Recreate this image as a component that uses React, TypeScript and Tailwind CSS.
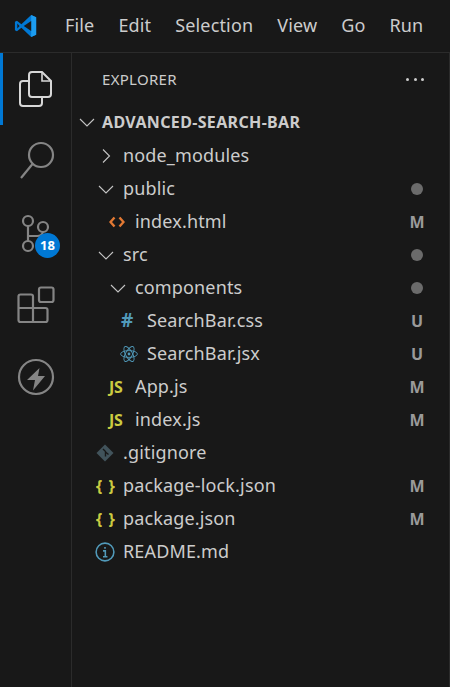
import React from "react";

const stroke = "#858585";

function Chevron({ open }: { open: boolean }) {
  return (
    <svg className="shrink-0" width="16" height="16" viewBox="0 0 16 16" fill="none" stroke="#c5c5c5" strokeWidth="1.1">
      {open ? <path d="M1 5l7 7 7-7" /> : <path d="M5 1.5l6.5 6.5L5 14.5" />}
    </svg>
  );
}

function VsLogo() {
  return (
    <svg className="shrink-0" width="24" height="24" viewBox="0 0 26 26">
      <path d="M18.6 1L8 11 3.2 7.3 1 8.4v9.2l2.2 1.1L8 15l10.6 10 5.4-2.4V3.4z" fill="#0078d4" />
      <path d="M18.6 1L24 3.4v19.2L18.6 25z" fill="#1c9cf0" />
      <path d="M18.6 7.5L10.6 13l8 5.5z" fill="#181818" />
      <path d="M3.6 10.2L6 13l-2.4 2.8z" fill="#181818" />
    </svg>
  );
}

function HtmlIcon() {
  return (
    <svg className="shrink-0" width="16" height="14" viewBox="0 0 16 14" fill="none" stroke="#e37933" strokeWidth="2.4">
      <path d="M5.5 2.5L1.5 7l4 4.5M10.5 2.5l4 4.5-4 4.5" />
    </svg>
  );
}

function CssIcon() {
  return <span className="text-[19px] font-bold leading-none text-[#519aba]">#</span>;
}

function ReactIcon() {
  return (
    <svg className="shrink-0" width="18" height="18" viewBox="0 0 18 18" fill="none" stroke="#519aba" strokeWidth="0.9">
      <ellipse cx="9" cy="9" rx="8.4" ry="3.4" />
      <ellipse cx="9" cy="9" rx="8.4" ry="3.4" transform="rotate(60 9 9)" />
      <ellipse cx="9" cy="9" rx="8.4" ry="3.4" transform="rotate(120 9 9)" />
      <circle cx="9" cy="9" r="1.4" fill="#519aba" stroke="none" />
    </svg>
  );
}

function JsIcon() {
  return <span className="text-[16px] font-bold leading-none tracking-[-0.3px] text-[#cbcb41]">JS</span>;
}

function GitIcon() {
  return (
    <svg className="shrink-0" width="18" height="18" viewBox="0 0 18 18">
      <path d="M9 0.5l8.5 8.5-8.5 8.5L0.5 9z" fill="#41535b" />
      <path d="M7 5l2.5 2.5v5M9.5 8l3 2.5" stroke="#181818" strokeWidth="1.4" fill="none" />
    </svg>
  );
}

function JsonIcon() {
  return <span className="whitespace-pre text-[16px] font-bold leading-none tracking-[1px] text-[#cbcb41]">{"{ }"}</span>;
}

function InfoIcon() {
  return (
    <svg className="shrink-0" width="20" height="20" viewBox="0 0 18 18" fill="none" stroke="#519aba" strokeWidth="1.4">
      <circle cx="9" cy="9" r="8" />
      <path d="M9 4.5v1.6M7.2 8H9.3v5M7.2 13.2h4" />
    </svg>
  );
}

type Row = {
  name: string;
  pad: string;
  slot: string;
  icon: React.ReactNode;
  badge?: "dot" | "M" | "U";
};

const rows: Row[] = [
  { name: "node_modules", pad: "pl-[26px]", slot: "w-[25px]", icon: <Chevron open={false} /> },
  { name: "public", pad: "pl-[26px]", slot: "w-[25px]", icon: <Chevron open />, badge: "dot" },
  { name: "index.html", pad: "pl-[37px]", slot: "w-[26px]", icon: <HtmlIcon />, badge: "M" },
  { name: "src", pad: "pl-[26px]", slot: "w-[25px]", icon: <Chevron open />, badge: "dot" },
  { name: "components", pad: "pl-[38px]", slot: "w-[25px]", icon: <Chevron open />, badge: "dot" },
  { name: "SearchBar.css", pad: "pl-[49px]", slot: "w-[26px]", icon: <CssIcon />, badge: "U" },
  { name: "SearchBar.jsx", pad: "pl-[48px]", slot: "w-[27px]", icon: <ReactIcon />, badge: "U" },
  { name: "App.js", pad: "pl-[37px]", slot: "w-[26px]", icon: <JsIcon />, badge: "M" },
  { name: "index.js", pad: "pl-[37px]", slot: "w-[26px]", icon: <JsIcon />, badge: "M" },
  { name: ".gitignore", pad: "pl-[24px]", slot: "w-[27px]", icon: <GitIcon /> },
  { name: "package-lock.json", pad: "pl-[24px]", slot: "w-[27px]", icon: <JsonIcon />, badge: "M" },
  { name: "package.json", pad: "pl-[24px]", slot: "w-[27px]", icon: <JsonIcon />, badge: "M" },
  { name: "README.md", pad: "pl-[23px]", slot: "w-[28px]", icon: <InfoIcon /> },
];

export default function App() {
  return (
    <div className="flex h-[687px] w-[450px] flex-col overflow-hidden bg-[#181818] font-['Noto_Sans','Open_Sans',sans-serif] text-[#cccccc]">
      <header className="flex h-[53px] shrink-0 items-center border-b border-[#2b2b2b] pb-px text-[18px] tracking-[0.15px]">
        <div className="ml-[14px] mr-[27px] flex w-[24px] justify-center"><VsLogo /></div>
        <nav className="flex gap-[24px]">
          {["File", "Edit", "Selection", "View", "Go", "Run"].map((m) => (
            <span key={m}>{m}</span>
          ))}
        </nav>
      </header>
      <div className="flex min-h-0 flex-1 border-r border-[#2b2b2b]">
        <aside className="flex w-[72px] shrink-0 flex-col border-r border-[#2b2b2b]">
          <div className="h-[72px] border-l-[3px] border-[#0078d4]">
            <svg width="68" height="72" viewBox="3 53 68 72" fill="none" stroke="#d7d7d7" strokeWidth="2">
              <path d="M29 81h-6a3 3 0 0 0-3 3v19a3 3 0 0 0 3 3h16a3 3 0 0 0 3-3v-6" />
              <path d="M29 75a3 3 0 0 1 3-3h10l9 9v13a3 3 0 0 1-3 3H32a3 3 0 0 1-3-3z" />
              <path d="M42 72v9h9" strokeWidth="1.6" />
            </svg>
          </div>
          <svg width="71" height="75" viewBox="0 125 71 75" fill="none" stroke={stroke} strokeWidth="2.2">
            <circle cx="41" cy="155" r="12" />
            <path d="M32.5 164L21 178" />
          </svg>
          <div className="relative h-[70px]">
            <svg width="71" height="70" viewBox="0 200 71 70" fill="none" stroke={stroke} strokeWidth="2.2">
              <circle cx="28" cy="221" r="5" />
              <circle cx="28" cy="246" r="5" />
              <circle cx="43" cy="227" r="5" />
              <path d="M28 226v15M28 236h9a6 6 0 0 0 6-4" />
            </svg>
            <span className="absolute left-[35px] top-[33px] flex h-[25px] w-[25px] items-center justify-center rounded-full bg-[#0078d4] text-[13px] font-bold text-white">18</span>
          </div>
          <svg width="71" height="70" viewBox="0 270 71 70" fill="none" stroke={stroke} strokeWidth="2.2">
            <rect x="39" y="287.5" width="14.5" height="14.5" rx="2" />
            <path d="M20.5 294.5H31a2 2 0 0 1 2 2V308h12.5a2 2 0 0 1 2 2v10a2 2 0 0 1-2 2h-25a2 2 0 0 1-2-2v-23.5a2 2 0 0 1 2-2zM18.5 308H33v14" />
          </svg>
          <svg width="71" height="70" viewBox="0 340 71 70" fill="none">
            <circle cx="36" cy="377" r="17" stroke={stroke} strokeWidth="2.2" />
            <path d="M39.5 368L27 380h8l-2 10.5L45 376h-7z" fill={stroke} />
          </svg>
        </aside>
        <main className="min-w-0 flex-1">
          <div className="flex h-[53px] items-center justify-between pl-[30px] pr-[25px] text-[15px] tracking-[0.3px]">
            <span>EXPLORER</span>
            <span className="flex gap-[4.5px]">
              <i className="h-[3px] w-[3px] rounded-full bg-[#cccccc]" />
              <i className="h-[3px] w-[3px] rounded-full bg-[#cccccc]" />
              <i className="h-[3px] w-[3px] rounded-full bg-[#cccccc]" />
            </span>
          </div>
          <div className="-mt-px flex h-[33px] items-center pl-[7px] text-[16px] font-bold tracking-[0.35px]">
            <span className="flex w-[23px] shrink-0"><Chevron open /></span>
            ADVANCED-SEARCH-BAR
          </div>
          <div className="pt-px">
            {rows.map((r) => (
              <div key={r.name} className={`flex h-[33px] items-center text-[18px] tracking-[0.15px] ${r.pad}`}>
                <span className={`flex shrink-0 items-center ${r.slot}`}>{r.icon}</span>
                <span className="flex-1 truncate">{r.name}</span>
                {r.badge === "dot" && <span className="mr-[26px] h-[12px] w-[12px] rounded-full bg-[#6b6b6b]" />}
                {(r.badge === "M" || r.badge === "U") && (
                  <span className="mr-[24px] w-[16px] text-center text-[16px] font-bold text-[#9a9a9a]">{r.badge}</span>
                )}
              </div>
            ))}
          </div>
        </main>
      </div>
    </div>
  );
}
